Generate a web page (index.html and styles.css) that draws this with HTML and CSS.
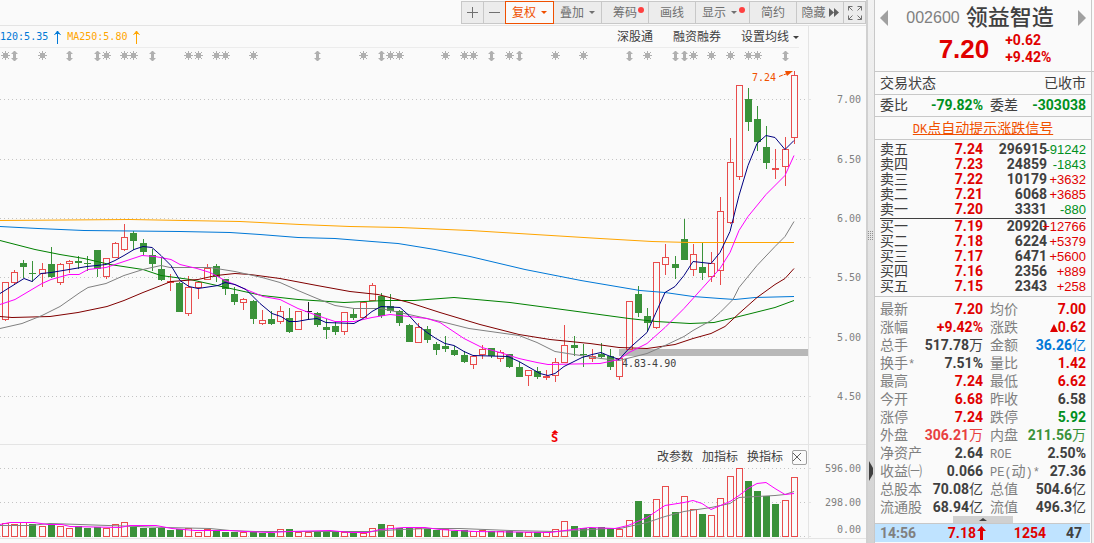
FILE: index.html
```html
<!DOCTYPE html>
<html lang="zh-CN">
<head>
<meta charset="utf-8">
<title>领益智造 002600</title>
<link rel="stylesheet" href="styles.css">
</head>
<body>
<div class="app">
  <main class="main">
    <div class="toolbar">
      <button class="tool icon" aria-label="放大"><svg width="11" height="11"><path d="M5.5 0v11M0 5.5h11" /></svg></button>
      <button class="tool icon" aria-label="缩小"><svg width="11" height="11"><path d="M0 5.5h11" /></svg></button>
      <button class="tool menu active">复权<i class="caret"></i></button>
      <button class="tool menu">叠加<i class="caret"></i></button>
      <button class="tool">筹码<i class="dot"></i></button>
      <button class="tool">画线</button>
      <button class="tool wide">显示<i class="caret"></i><i class="dot"></i></button>
      <button class="tool">简约</button>
      <button class="tool tight">隐藏<svg width="10" height="9"><path class="solid" d="M0 0l5 4.500L0 9zM5 0l5 4.500L5 9z" /></svg></button>
      <button class="tool icon" aria-label="全屏"><svg width="14" height="14"><path d="M.5 4.500v-4h4M.5.5l4 4M9.500.5h4v4M13.500.5l-4 4M.5 9.500v4h4M.5 13.500l4-4M13.500 9.500v4h-4M13.500 13.500l-4-4" /></svg></button>
    </div>
    <div class="legend-row">
      <div class="legend">
        <span class="ma120">MA120:5.35</span><svg class="ma120" width="9" height="14"><path d="M4.500 1v13M1.500 5l3-4 3 4M3 3.500h3" /></svg>
        <span class="ma250">MA250:5.80</span><svg class="ma250" width="9" height="14"><path d="M4.500 1v13M1.500 5l3-4 3 4M3 3.500h3" /></svg>
      </div>
      <nav class="links">
        <a href="#">深股通</a><a href="#">融资融券</a><button>设置均线<i class="caret"></i></button>
      </nav>
      <div class="axis-gap"></div>
    </div>
    <svg id="price" class="price" viewBox="0 48 866 396" preserveAspectRatio="xMaxYMin meet">
      <path class="rule" d="M808.5 48V444" />
      <rect class="gap" x="619" y="349" width="189" height="7" />
      <g id="price-grid"></g>
      <g id="marks"></g>
      <g id="candles"></g>
      <g class="lines">
        <polyline stroke="#ffa500" points="0,220 130,219 184,220 240,221 300,224 350,226 400,227 470,230 535,234 600,238 652,241 690,242 794,242" />
        <polyline stroke="#0078d7" points="0,226 38,228 84,230 180,231 230,232 260,234 298,237 335,238 372,241 398,243 435,249 470,256 525,269 581,280 640,290 665,292 693,296 720,298 735,299 755,297 794,296" />
        <polyline stroke="#008000" points="0,240 35,249 60,254 84,258 110,264 143,269 161,275 190,279 235,289 262,295 298,299 344,302 385,300 414,300 454,297 510,302 570,310 629,318 656,321 690,323 714,322 739,316 775,307 794,300" />
        <polyline stroke="#800000" points="0,316 12,317 50,316 78,312 107,306 124,300 143,292 161,285 171,281 198,279 216,275 235,273 250,274 280,278 317,285 350,291 378,294 409,302 440,312 480,324 519,334 550,339 590,343 619,347 647,348 675,344 693,338 711,333 725,326 739,313 757,297 775,284 785,278 794,268" />
        <polyline stroke="#808080" points="0,328 22,323 42,315 60,306 80,292 88,287 106,283 124,275 143,269 161,265 170,267 210,267 235,271 262,277 280,282 298,290 317,298 335,305 354,308 381,308 409,314 427,318 445,322 469,328 519,335 537,342 555,351 574,354 601,358 619,360 647,353 665,345 684,336 693,330 711,320 720,312 733,299 739,287 757,265 775,246 785,236 794,221" />
        <polyline stroke="#ff00ff" points="0,304 15,299 42,283 51,279 69,274 79,274 88,269 106,267 124,261 142,255 155,256 171,259 180,264 197,268 210,272 225,280 246,289 263,296 280,299 298,308 317,315 335,321 354,321 372,317 390,314 409,316 427,318 440,322 464,338 482,347 500,352 519,358 537,362 548,364 600,363 619,359 629,352 647,343 665,327 684,308 702,288 720,268 730,252 739,230 748,216 766,194 785,175 794,155" />
        <polyline stroke="#000080" points="0,293 24,278 32,281 41,273 51,272 87,266 106,264 115,260 124,255 134,249 143,246 152,247 161,255 171,265 180,280 189,286 198,288 218,285 225,282 235,284 246,289 260,303 272,313 281,316 289,321 297,321 308,319 317,318 326,322 354,323 363,318 372,311 381,306 400,307 409,315 418,325 427,332 436,338 445,343 454,345 464,351 473,355 508,356 519,361 540,373 548,375 555,373 564,366 582,357 592,354 601,352 608,355 619,359 629,348 647,332 656,312 665,292 675,286 684,275 693,261 702,262 711,263 720,252 730,231 739,195 748,165 757,143 766,135 775,137 785,149 794,140" />
      </g>
      <text class="note" x="622" y="367">4.83-4.90</text>
      <text class="peak" x="752" y="81">7.24</text>
      <path class="peak-arrow" d="M779 76.500L790 72.500" />
      <path class="peak-fill" d="M785 71h8l-6 5z" />
      <text class="event" x="551" y="442">S</text>
      <path class="event-tip" d="M551.500 433l3.500-3 3.500 3z" />
    </svg>
    <section class="volume">
      <svg id="volume" viewBox="0 445 866 93" preserveAspectRatio="xMaxYMin meet">
        <path class="rule" d="M808.5 445V538" />
        <g id="volume-grid"></g>
        <g id="bars"></g>
        <g class="lines">
          <polyline stroke="#808080" points="0,525 30,525 50,523 80,524 165,527 210,528 230,530 255,531 370,531 400,529 430,528 460,528 510,530 555,531 610,528 620,528 647,522 665,516 684,511 711,507 730,503 739,497 775,495 785,494 794,491" />
          <polyline stroke="#ff00ff" points="0,524 10,522 34,522 48,524 62,524 70,526 120,527 130,525 156,525 172,528 195,530 230,530 245,531 270,532 290,531 330,530 350,532 368,532 380,529 404,527 425,527 440,529 475,531 550,532 565,530 590,527 615,528 628,525 647,517 656,511 665,505 684,502 693,500 702,503 711,509 730,501 739,495 748,488 757,483 766,482 775,488 785,494 794,493" />
        </g>
      </svg>
      <div class="volume-tools">
        <button>改参数</button><button>加指标</button><button>换指标</button>
        <button class="close" aria-label="关闭"><svg width="8" height="8"><path d="M0 0l8 8M8 0L0 8" /></svg></button>
      </div>
    </section>
    <div class="foot"></div>
  </main>

  <div class="splitter">
    <svg class="grip" width="6" height="9"><path d="M.5 0v9M2.500 0v9M4.500 0v9" /></svg>
    <svg class="fold" width="4" height="20"><path d="M0 0l4 7v6l-4 7z" /></svg>
  </div>

  <aside class="quote">
    <header class="head">
      <div class="title">
        <button class="prev" aria-label="上一只"></button>
        <h1><span class="code">002600</span><span class="name">领益智造</span></h1>
        <button class="next" aria-label="下一只"></button>
      </div>
      <div class="last">
        <strong class="now">7.20</strong>
        <div class="change"><span>+0.62</span><span>+9.42%</span></div>
      </div>
    </header>
    <div class="line status"><span>交易状态</span><span>已收市</span></div>
    <div class="line pairs">
      <div><span>委比</span><b class="down">-79.82%</b></div>
      <div><span>委差</span><b class="down">-303038</b></div>
    </div>
    <div class="line signal"><a href="#"><span class="latin">DK</span>点自动提示涨跌信号</a></div>
    <div class="book">
      <table>
        <tr><th>卖五</th><td class="p">7.24</td><td class="v">296915</td><td class="d down"><span>-91242</span></td></tr>
        <tr><th>卖四</th><td class="p">7.23</td><td class="v">24859</td><td class="d down"><span>-1843</span></td></tr>
        <tr><th>卖三</th><td class="p">7.22</td><td class="v">10179</td><td class="d up"><span>+3632</span></td></tr>
        <tr><th>卖二</th><td class="p">7.21</td><td class="v">6068</td><td class="d up"><span>+3685</span></td></tr>
        <tr><th>卖一</th><td class="p">7.20</td><td class="v">3331</td><td class="d down"><span>-880</span></td></tr>
      </table>
      <table class="bids">
        <tr><th>买一</th><td class="p">7.19</td><td class="v">20920</td><td class="d up"><span>+12766</span></td></tr>
        <tr><th>买二</th><td class="p">7.18</td><td class="v">6224</td><td class="d up"><span>+5379</span></td></tr>
        <tr><th>买三</th><td class="p">7.17</td><td class="v">6471</td><td class="d up"><span>+5600</span></td></tr>
        <tr><th>买四</th><td class="p">7.16</td><td class="v">2356</td><td class="d up"><span>+889</span></td></tr>
        <tr><th>买五</th><td class="p">7.15</td><td class="v">2343</td><td class="d up"><span>+258</span></td></tr>
      </table>
    </div>
    <dl class="pairs stats">
      <div><dt>最新</dt><dd class="up">7.20</dd></div><div><dt>均价</dt><dd class="up">7.00</dd></div>
      <div><dt>涨幅</dt><dd class="up">+9.42%</dd></div><div><dt>涨跌</dt><dd class="up"><i class="rise"></i>0.62</dd></div>
      <div><dt>总手</dt><dd>517.78<small>万</small></dd></div><div><dt>金额</dt><dd class="blue">36.26<small>亿</small></dd></div>
      <div><dt>换手<span class="latin">*</span></dt><dd>7.51%</dd></div><div><dt>量比</dt><dd class="up">1.42</dd></div>
      <div><dt>最高</dt><dd class="up">7.24</dd></div><div><dt>最低</dt><dd class="up">6.62</dd></div>
      <div><dt>今开</dt><dd class="up">6.68</dd></div><div><dt>昨收</dt><dd>6.58</dd></div>
      <div><dt>涨停</dt><dd class="up">7.24</dd></div><div><dt>跌停</dt><dd class="down">5.92</dd></div>
      <div><dt>外盘</dt><dd class="sell">306.21<small>万</small></dd></div><div><dt>内盘</dt><dd class="buy">211.56<small>万</small></dd></div>
      <div><dt>净资产</dt><dd>2.64</dd></div><div><dt><span class="latin">ROE</span></dt><dd>2.50%</dd></div>
      <div><dt>收益㈠</dt><dd>0.066</dd></div><div><dt><span class="latin">PE(</span>动<span class="latin">)*</span></dt><dd>27.36</dd></div>
      <div><dt>总股本</dt><dd>70.08<small>亿</small></dd></div><div><dt>总值</dt><dd>504.6<small>亿</small></dd></div>
      <div><dt>流通股</dt><dd>68.94<small>亿</small></dd></div><div><dt>流值</dt><dd>496.3<small>亿</small></dd></div>
    </dl>
    <button class="expand" aria-label="收起"></button>
    <div class="tick">
      <time>14:56</time>
      <b class="up price-cell">7.18<svg width="9" height="14"><path d="M3 14V5H0l4.500-5L9 5H6v9z" /></svg></b>
      <b class="up">1254</b>
      <b>47</b>
    </div>
  </aside>
  <div class="edge"></div>
</div>
<script src="chart.js"></script>
</body>
</html>
```
FILE: styles.css
```css
* { box-sizing: border-box; }

body {
  margin: 0;
  background: #fafafa;
  color: #404040;
  font: 12px/16px "Liberation Sans", "Noto Sans CJK SC", sans-serif;
}

button {
  margin: 0;
  padding: 0;
  border: 0;
  background: none;
  color: inherit;
  font: inherit;
}

a { color: inherit; text-decoration: none; }

svg { display: block; }

.app { display: flex; min-height: 100vh; overflow: hidden; }

.main { flex: 1; min-width: 0; display: flex; flex-direction: column; }

/* toolbar */
.toolbar {
  display: flex;
  justify-content: flex-end;
  height: 26px;
  padding: 1px 0;
  border-bottom: 1px solid #e4e4e4;
}

.tool {
  display: flex;
  align-items: center;
  justify-content: center;
  gap: 5px;
  position: relative;
  width: 48px;
  height: 23px;
  border: 1px solid #c8c8c8;
  background: #ececec;
  color: #707070;
}

.tool + .tool { margin-left: -1px; }
.tool.icon { width: 23px; }
.tool.menu { width: 49px; }
.tool.wide { width: 55px; padding-right: 6px; }
.tool.tight { gap: 3px; }
.tool.active { z-index: 1; border-color: #f05000; background: #fafafa; color: #f05000; }
.tool path { fill: none; stroke: #707070; }
.tool path.solid { fill: #606060; stroke: none; }

.caret {
  border: 3px solid transparent;
  border-top-color: currentColor;
  border-bottom: 0;
}

.dot {
  position: absolute;
  top: 5px;
  right: 4px;
  width: 6px;
  height: 6px;
  border-radius: 50%;
  background: #ff4040;
}

/* moving-average legend */
.legend-row { display: flex; height: 22px; }

.legend {
  flex: 1;
  display: flex;
  align-items: center;
  gap: 5px;
  overflow: hidden;
  padding-top: 1px;
  border-bottom: 1px solid #ececec;
  font: 10px/16px "DejaVu Sans Mono", monospace;
}

.legend span:first-child { margin-left: -12px; }
.legend path { fill: none; stroke: currentColor; }
.ma120 { color: #0078d7; }
.ma250 { color: #ffa500; }

.links {
  display: flex;
  align-items: center;
  gap: 20px;
  padding-top: 1px;
  border-bottom: 1px solid #ececec;
}

.links button { display: flex; align-items: center; gap: 4px; }
.axis-gap { width: 67px; }
.axis-gap::before {
  content: "";
  display: block;
  width: 1px;
  height: 100%;
  margin-left: 9px;
  background: #e4e4e4;
}

/* charts */
.price, .volume svg { width: 100%; }
.rule { stroke: #e4e4e4; }
.gap { fill: #b8b8b8; }
.grid-line { stroke: #c4c4c4; stroke-dasharray: 1 3; }
.lines polyline { fill: none; stroke-width: 1; transform: translate(0, 0.500px); }
.price text, .volume text {
  font: 10px "DejaVu Sans Mono", monospace;
  fill: #808080;
}
.rise-box { fill: #fafafa; stroke: #e84c4c; }
.rise-wick { stroke: #e84c4c; }
.fall-box { fill: #3a923a; stroke: #3a923a; }
.fall-wick { stroke: #3a923a; }
.flat-wick { stroke: #202020; }
.mark { fill: none; stroke: #b0b0b0; }
.mark-fill { fill: #b0b0b0; }
.price .note { fill: #404040; }
.price .peak { fill: #f05000; }
.peak-arrow { stroke: #f05000; stroke-dasharray: 4 1; }
.peak-fill { fill: #f05000; }
.price .event { fill: #f00000; font: bold 12px "DejaVu Sans Mono", monospace; }
.event-tip { fill: #f00000; }

.volume { position: relative; border-top: 1px solid #e4e4e4; border-bottom: 1px solid #e4e4e4; }

.volume-tools {
  position: absolute;
  top: 4px;
  right: 59px;
  display: flex;
  align-items: center;
  gap: 9px;
}

.volume-tools .close {
  display: grid;
  place-items: center;
  width: 15px;
  height: 15px;
  border: 1px solid #a0a0a0;
  border-radius: 2px;
}

.close path { stroke: #606060; }
.foot { flex: 1; }

/* splitter */
.splitter {
  position: relative;
  width: 9px;
  border-left: 2px solid #d0d0d0;
  border-right: 1px solid #c8c8c8;
  background: linear-gradient(#f2f2f2, #d2d2d2);
}

.grip { position: absolute; top: 231px; left: 0; }
.grip path { stroke: #909090; stroke-dasharray: 1 1; }
.fold { position: absolute; top: 461px; left: 1px; }
.fold path { fill: #404040; }

/* quote panel */
.quote {
  width: 217px;
  border-right: 1px solid #c8c8c8;
  font-size: 14px;
  line-height: 18px;
}

.quote b, .quote dd, .book .p, .book .v, .change, .tick {
  font-family: Roboto, "Noto Sans CJK SC", sans-serif;
  font-weight: bold;
}

.latin { font: 12px/1 "Liberation Mono", monospace; }

.up { color: #e00000; }
.down { color: #009020; }
.blue { color: #0078d7; }
.sell { color: #e84040; }
.buy { color: #3a923a; }

.head { height: 72px; padding: 4px 5px 0; border-bottom: 1px solid #c8c8c8; }
.title { display: flex; align-items: center; justify-content: space-between; height: 27px; }
.title h1 { display: flex; align-items: center; gap: 6px; margin: 0; padding-right: 6px; }
.code { color: #808080; font-size: 16px; font-weight: normal; }
.name { font-size: 22px; font-weight: 500; line-height: 27px; }

.prev, .next { border: 8px solid transparent; }
.prev { border-left: 0; border-right-color: #a0a0a0; }
.next { border-right: 0; border-left-color: #a0a0a0; }

.last { display: flex; align-items: center; justify-content: center; gap: 16px; padding-left: 24px; color: #e00000; }
.now { font-size: 26px; line-height: 32px; }
.change { display: grid; line-height: 17px; padding-top: 1px; }

.line { height: 22px; margin: 0; padding: 0 5px; border-bottom: 1px solid #c8c8c8; line-height: 21px; }
.status { display: flex; justify-content: space-between; height: 23px; line-height: 22px; }
.signal { height: 23px; text-align: center; }
.signal a { color: #f05000; line-height: 22px; text-decoration: underline; }

.pairs { display: grid; grid-template-columns: 103fr 96fr; column-gap: 7px; padding: 0 5px; }
.pairs > div { display: flex; justify-content: space-between; white-space: nowrap; }

.book { padding: 2px 5px; border-bottom: 1px solid #c8c8c8; }
.book table { width: 100%; border-collapse: collapse; table-layout: fixed; line-height: 15px; }
.book tr { height: 15px; }
.book th, .book td { padding: 0; text-align: right; white-space: nowrap; }
.book th { width: 40px; font-weight: normal; text-align: left; }
.book .p { width: 63px; color: #e00000; }
.book .v { width: 64px; }
.book .d { font-size: 13px; }
.book .d span { display: inline-block; margin-left: -8px; }
.book .bids { margin-top: 1px; border-top: 1px solid #404040; }

.stats { margin: 0; padding-top: 3px; }
.stats dt { height: 18px; color: #808080; }
.stats dd { height: 18px; margin: 0; }
.stats small { font-size: 14px; font-weight: normal; }

.rise {
  display: inline-block;
  border: 4px solid transparent;
  border-top: 0;
  border-bottom: 8px solid #e00000;
}

.expand {
  display: grid;
  place-items: center;
  width: 60px;
  height: 7px;
  margin: 0 auto;
  background: #d0d0d0;
}

.expand::before { content: ""; border: 4px solid transparent; border-top: 0; border-bottom: 3px solid #404040; }

.tick {
  display: grid;
  grid-template-columns: 40px 66px 1fr 36px;
  margin-right: 1px;
  padding: 0 8px 0 5px;
  border-top: 1px solid #c8c8c8;
  background: #bfe3ff;
  text-align: right;
}

.tick time { color: #808080; text-align: left; }
.price-cell { display: flex; align-items: center; justify-content: flex-end; gap: 1px; }
.price-cell path { fill: #e00000; }

.edge { width: 2px; border-top: 1px solid #c8c8c8; margin-top: 71px; background: #f2f2f2; }
```
FILE: chart.js
```js
// Each row: x, kind (r rise, g fall, k flat), high, body top, body bottom, low, volume kind, volume top
const rows = `
5 r 282 282 319 321 r 523|14 r 270 272 282 285 r 524|23 g 260 263 267 278 r 522|32 g 261 273 274 282 g 524
42 r 263 269 273 287 r 526|51 g 247 264 277 278 g 524|60 r 263 264 282 285 r 526|69 r 260 261 263 273 r 528
78 g 256 261 263 269 g 526|87 g 256 263 264 271 g 528|97 g 250 250 269 277 g 527|106 r 258 258 276 279 r 528
115 r 242 243 257 257 r 524|124 r 224 237 249 251 r 522|133 g 231 233 241 250 g 527|143 g 239 243 252 255 g 528
152 g 249 255 264 271 g 528|161 g 257 269 280 281 g 528|170 r 274 281 282 291 g 530|179 g 282 283 312 312 g 529
188 r 276 287 313 316 r 528|198 r 281 282 287 299 r 532|207 r 264 268 279 279 r 529|216 g 264 266 277 282 g 531
225 g 279 279 289 295 g 532|234 g 287 294 302 305 g 532|243 r 298 299 302 310 r 532|253 g 300 301 319 324 g 532
262 r 310 320 323 325 g 533|271 g 311 319 324 325 g 533|280 r 306 311 321 324 r 529|289 g 308 318 332 333 g 529
298 r 311 311 329 329 r 532|308 k 302 311 312 320 r 532|317 g 312 313 325 327 g 532|326 g 319 327 330 339 g 532
335 g 322 326 332 335 g 532|344 r 312 312 331 335 r 532|353 g 309 314 318 320 g 533|363 r 302 302 317 317 r 533
372 r 283 285 300 300 r 528|381 g 293 296 316 318 g 524|390 g 294 306 311 313 r 525|399 g 310 311 323 326 g 528
409 g 324 325 342 342 g 527|418 r 323 327 342 342 r 528|427 g 326 329 340 343 g 529|436 g 342 344 350 355 g 530
445 g 336 346 349 352 r 529|454 g 346 350 355 356 g 531|464 g 351 355 362 363 g 530|473 r 355 356 364 369 r 531
482 r 345 349 354 359 r 530|491 g 348 348 356 358 g 531|500 r 350 352 358 362 r 531|509 g 354 354 367 368 g 531
519 g 362 367 377 377 g 532|528 r 370 370 375 386 r 532|537 g 367 371 377 379 g 532|546 r 370 376 377 380 r 532
555 r 358 362 375 382 r 529|564 r 325 345 362 362 r 521|574 g 336 345 348 356 g 526|583 g 344 354 355 367 g 528
592 r 349 356 358 362 g 528|601 g 343 354 357 358 g 527|610 g 349 356 367 370 g 528|619 r 358 358 376 380 r 529
629 r 301 301 349 349 r 520|638 g 286 294 313 317 g 501|647 g 308 316 323 331 g 514|656 r 262 262 327 329 r 499
665 r 244 257 264 275 r 486|675 g 256 264 268 279 g 512|684 g 219 239 260 260 r 496|693 r 244 254 269 276 r 509
702 g 243 267 273 280 g 514|711 r 252 263 276 282 r 515|720 r 197 211 270 285 r 498|730 r 138 162 222 224 r 476
739 r 85 85 176 180 r 468|748 g 88 99 122 131 g 481|757 g 106 119 142 151 g 491|766 g 126 147 163 169 g 496
775 r 149 168 169 179 g 504|785 r 137 149 166 186 r 500|794 r 71 75 137 144 r 477`
  .trim().split(/[|\n]/).map(row => row.split(" "));

const byId = id => document.getElementById(id);
const names = { r: "rise", g: "fall", k: "flat" };

let candles = "", bars = "";
for (const [xs, kind, high, top, bottom, low, volKind, volTop] of rows) {
  const x = +xs, name = names[kind], t = +top, b = +bottom;
  if (t > +high) candles += `<path class="${name}-wick" d="M${x + .5} ${high}V${t}" />`;
  if (+low > b) candles += `<path class="${name}-wick" d="M${x + .5} ${b}V${low}" />`;
  if (b - t <= 1 && kind !== "r") {
    candles += `<path class="${name}-wick" d="M${x - 3} ${t + .5}h7" />`;
  } else {
    const h = kind === "r" ? b - t : b - t - 1;
    candles += `<rect class="${name}-box" x="${x - 2.5}" y="${t + .5}" width="6" height="${h}" />`;
  }
  bars += `<rect class="${names[volKind]}-box" x="${x - 2.5}" y="${+volTop + .5}" width="6" height="${536 - volTop}" />`;
}
byId("candles").innerHTML = candles;
byId("bars").innerHTML = bars;

const grid = (levels, labelShift) => levels.map(([y, label, shift = labelShift]) =>
  `<path class="grid-line" d="M0 ${y + .5}H808" /><path class="rule" d="M808 ${y + .5}h3" />` +
  `<text x="861" y="${y + shift}" text-anchor="end">${label}</text>`).join("");
byId("price-grid").innerHTML = grid([[99, "7.00"], [159, "6.50"], [218, "6.00"], [277, "5.50"], [337, "5.00"], [396, "4.50"]], 4);
byId("volume-grid").innerHTML = grid([[468, "596.00"], [502, "298.00"], [536, "0.00", -3]], 4);

const stars = [5, 42, 106, 124, 133, 188, 198, 216, 225, 253, 363, 390, 399, 445, 464, 473, 509, 555, 583, 647, 693, 711, 730, 748, 757];
const pills = [14, 69, 97, 152, 317, 381, 491, 519, 629, 675, 684, 785];
byId("marks").innerHTML =
  stars.map(x => `<path class="mark" d="M${x + .5} 51v9M${x - 4} 55.5h9M${x - 3} 52l7 7M${x + 4} 52l-7 7" /><rect class="mark-fill" x="${x - 2}" y="53" width="5" height="5" />`).join("") +
  pills.map(x => `<path class="mark-fill" d="M${x} 51h1l3 3h-2v4h2l-3 3h-1l-3-3h2v-4h-2z" />`).join("");
```
